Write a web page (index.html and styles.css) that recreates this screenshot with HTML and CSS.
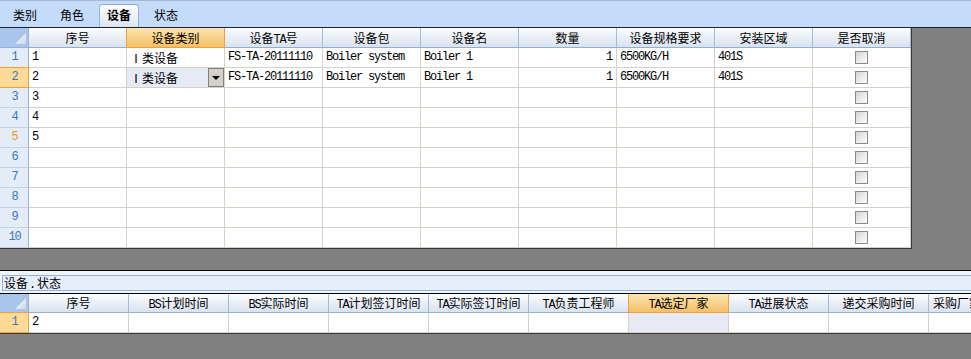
FILE: index.html
```html
<!DOCTYPE html>
<html lang="zh-CN">
<head>
<meta charset="utf-8">
<title>设备</title>
<link rel="stylesheet" href="styles.css">
</head>
<body>
<div class="tabs">
  <span class="tab">类别</span>
  <span class="tab">角色</span>
  <span class="tab on">设备</span>
  <span class="tab">状态</span>
</div>
<div class="upper">
  <div class="grid g1">
    <div class="c corner"><span class="tri"></span></div>
    <div class="c h">序号</div>
    <div class="c h sel">设备类别</div>
    <div class="c h">设备<span class="m">TA</span>号</div>
    <div class="c h">设备包</div>
    <div class="c h">设备名</div>
    <div class="c h">数量</div>
    <div class="c h">设备规格要求</div>
    <div class="c h">安装区域</div>
    <div class="c h">是否取消</div>

    <div class="c rh">1</div>
    <div class="c m">1</div>
    <div class="c">Ⅰ类设备</div>
    <div class="c m">FS-TA-20111110</div>
    <div class="c m">Boiler system</div>
    <div class="c m">Boiler 1</div>
    <div class="c m r">1</div>
    <div class="c m">6500KG/H</div>
    <div class="c m">401S</div>
    <div class="c ck"><span class="box"></span></div>

    <div class="c rh sel">2</div>
    <div class="c m">2</div>
    <div class="c cur"><span>Ⅰ类设备</span><span class="dd"></span></div>
    <div class="c m">FS-TA-20111110</div>
    <div class="c m">Boiler system</div>
    <div class="c m">Boiler 1</div>
    <div class="c m r">1</div>
    <div class="c m">6500KG/H</div>
    <div class="c m">401S</div>
    <div class="c ck"><span class="box"></span></div>

    <div class="c rh">3</div>
    <div class="c m">3</div>
    <div class="c"></div><div class="c"></div><div class="c"></div><div class="c"></div><div class="c"></div><div class="c"></div><div class="c"></div>
    <div class="c ck"><span class="box"></span></div>

    <div class="c rh">4</div>
    <div class="c m">4</div>
    <div class="c"></div><div class="c"></div><div class="c"></div><div class="c"></div><div class="c"></div><div class="c"></div><div class="c"></div>
    <div class="c ck"><span class="box"></span></div>

    <div class="c rh o">5</div>
    <div class="c m">5</div>
    <div class="c"></div><div class="c"></div><div class="c"></div><div class="c"></div><div class="c"></div><div class="c"></div><div class="c"></div>
    <div class="c ck"><span class="box"></span></div>

    <div class="c rh">6</div>
    <div class="c"></div><div class="c"></div><div class="c"></div><div class="c"></div><div class="c"></div><div class="c"></div><div class="c"></div><div class="c"></div>
    <div class="c ck"><span class="box"></span></div>

    <div class="c rh">7</div>
    <div class="c"></div><div class="c"></div><div class="c"></div><div class="c"></div><div class="c"></div><div class="c"></div><div class="c"></div><div class="c"></div>
    <div class="c ck"><span class="box"></span></div>

    <div class="c rh">8</div>
    <div class="c"></div><div class="c"></div><div class="c"></div><div class="c"></div><div class="c"></div><div class="c"></div><div class="c"></div><div class="c"></div>
    <div class="c ck"><span class="box"></span></div>

    <div class="c rh">9</div>
    <div class="c"></div><div class="c"></div><div class="c"></div><div class="c"></div><div class="c"></div><div class="c"></div><div class="c"></div><div class="c"></div>
    <div class="c ck"><span class="box"></span></div>

    <div class="c rh">10</div>
    <div class="c"></div><div class="c"></div><div class="c"></div><div class="c"></div><div class="c"></div><div class="c"></div><div class="c"></div><div class="c"></div>
    <div class="c ck"><span class="box"></span></div>
  </div>
</div>
<div class="capbar">
  <div class="cap">设备<span class="m dot">.</span>状态</div>
</div>
<div class="grid g2">
  <div class="c corner"><span class="tri"></span></div>
  <div class="c h">序号</div>
  <div class="c h"><span class="m">BS</span>计划时间</div>
  <div class="c h"><span class="m">BS</span>实际时间</div>
  <div class="c h"><span class="m">TA</span>计划签订时间</div>
  <div class="c h"><span class="m">TA</span>实际签订时间</div>
  <div class="c h"><span class="m">TA</span>负责工程师</div>
  <div class="c h sel"><span class="m">TA</span>选定厂家</div>
  <div class="c h"><span class="m">TA</span>进展状态</div>
  <div class="c h">递交采购时间</div>
  <div class="c h lft">采购厂家</div>

  <div class="c rh sel">1</div>
  <div class="c m">2</div>
  <div class="c"></div>
  <div class="c"></div>
  <div class="c"></div>
  <div class="c"></div>
  <div class="c"></div>
  <div class="c selcol"></div>
  <div class="c"></div>
  <div class="c"></div>
  <div class="c"></div>
</div>
</body>
</html>
```

FILE: styles.css
```css
* { box-sizing: border-box; }

body {
  margin: 0;
  height: 359px;
  overflow: hidden;
  background: #808080;
  color: #000;
  font-family: "Noto Sans CJK SC", sans-serif;
  font-size: 12px;
  line-height: 1;
}

.m {
  font-family: "Liberation Mono", "Noto Sans CJK SC", monospace;
  letter-spacing: -1.2px;
}

/* tab strip */
.tabs {
  height: 28px;
  background: #c4dbf9;
  border-top: 1px solid #a2b8d5;
  border-bottom: 1px solid #1c2330;
  display: flex;
  align-items: flex-end;
  gap: 7px;
  padding-left: 5px;
}
.tab {
  width: 40px;
  height: 23px;
  display: flex;
  align-items: center;
  justify-content: center;
  padding-bottom: 2px;
}
.tab.on {
  background: linear-gradient(#fefeff, #dae5f3);
  border: 1px solid #8fb1dc;
  border-bottom: none;
  border-radius: 3px 3px 0 0;
  font-weight: bold;
}

/* upper area */
.upper {
  height: 242px;
}

.grid {
  display: grid;
  background: #fff;
}
.g1 {
  grid-template-columns: 29px repeat(9, 98px);
  grid-auto-rows: 20px;
  width: 912px;
  border-right: 1px solid #3a3a3a;
  border-bottom: 1px solid #3a3a3a;
}
.g2 {
  grid-template-columns: 29px repeat(10, 100px);
  grid-template-rows: 19px 20px;
  width: 1029px;
  border-bottom: 1px solid #3a3a3a;
}

.c {
  border-right: 1px solid #d5d1c9;
  border-bottom: 1px solid #d5d1c9;
  padding: 0 3px;
  line-height: 19px;
  white-space: nowrap;
  overflow: hidden;
}
.g2 .h {
  line-height: 18px;
}

.h {
  text-align: center;
  background: linear-gradient(#fbfcfe, #d9e2ee);
  border-right-color: #a4bcd8;
  border-bottom-color: #93b0d2;
}
.h.sel {
  background: linear-gradient(#fbe5b0, #f4bf68);
  border-right-color: #f0a040;
  border-bottom-color: #f0a040;
  box-shadow: -1px 0 0 #f0a040;
}
.h.lft {
  text-align: left;
  padding-left: 4px;
}

.corner {
  display: flex;
  background: #a9c5eb;
  border-right-color: #98b3d6;
  border-bottom-color: #93b0d2;
  justify-content: flex-end;
  align-items: flex-end;
  padding: 0 2px 3px 0;
}
.tri {
  width: 11px;
  height: 11px;
  background: linear-gradient(135deg, #f6f9fc, #cdd9e9);
  clip-path: polygon(100% 0, 100% 100%, 0 100%);
}

.rh {
  text-align: center;
  background: #e4ecf7;
  border-right-color: #98b3d6;
  border-bottom-color: #c6d3e4;
  color: #3a78b8;
  font-family: "Liberation Mono", monospace;
  letter-spacing: -1.2px;
  padding: 0 0 0 1px;
}
.rh.sel {
  background: #ffd996;
  border-right-color: #f0a040;
  border-bottom-color: #f0a040;
  box-shadow: 0 -1px 0 #f0a040;
}
.rh.o {
  color: #f09818;
}

.r {
  text-align: right;
  padding-right: 4px;
}

.cur {
  display: flex;
  align-items: center;
  background: #e6eaf5;
  padding-right: 0;
}
.dd {
  margin-left: auto;
  width: 16px;
  height: 19px;
  background: #d4d0c8;
  border: 1px solid #7e7e7e;
  display: flex;
  align-items: center;
  justify-content: center;
}
.dd::after {
  content: "";
  border-left: 4px solid transparent;
  border-right: 4px solid transparent;
  border-top: 4px solid #000;
}

.ck {
  display: flex;
  align-items: center;
  justify-content: center;
}
.box {
  width: 13px;
  height: 13px;
  border: 1px solid #8c8c8c;
  background: linear-gradient(135deg, #d2d3d6, #eeeeef 60%, #fdfdfd);
}

.selcol {
  background: #e7e9f4;
}

/* caption bar */
.capbar {
  height: 24px;
  border-top: 1px solid #000;
  border-bottom: 1px solid #000;
  background: #f1f5fb;
  padding: 4px 0 2px 2px;
}
.cap {
  height: 16px;
  border: 1px solid #8eb3e6;
  border-right: none;
  background: #e6eefa;
  padding-left: 1px;
  line-height: 14px;
  white-space: nowrap;
}
.dot {
  padding: 0 2px 0 1px;
}
```
